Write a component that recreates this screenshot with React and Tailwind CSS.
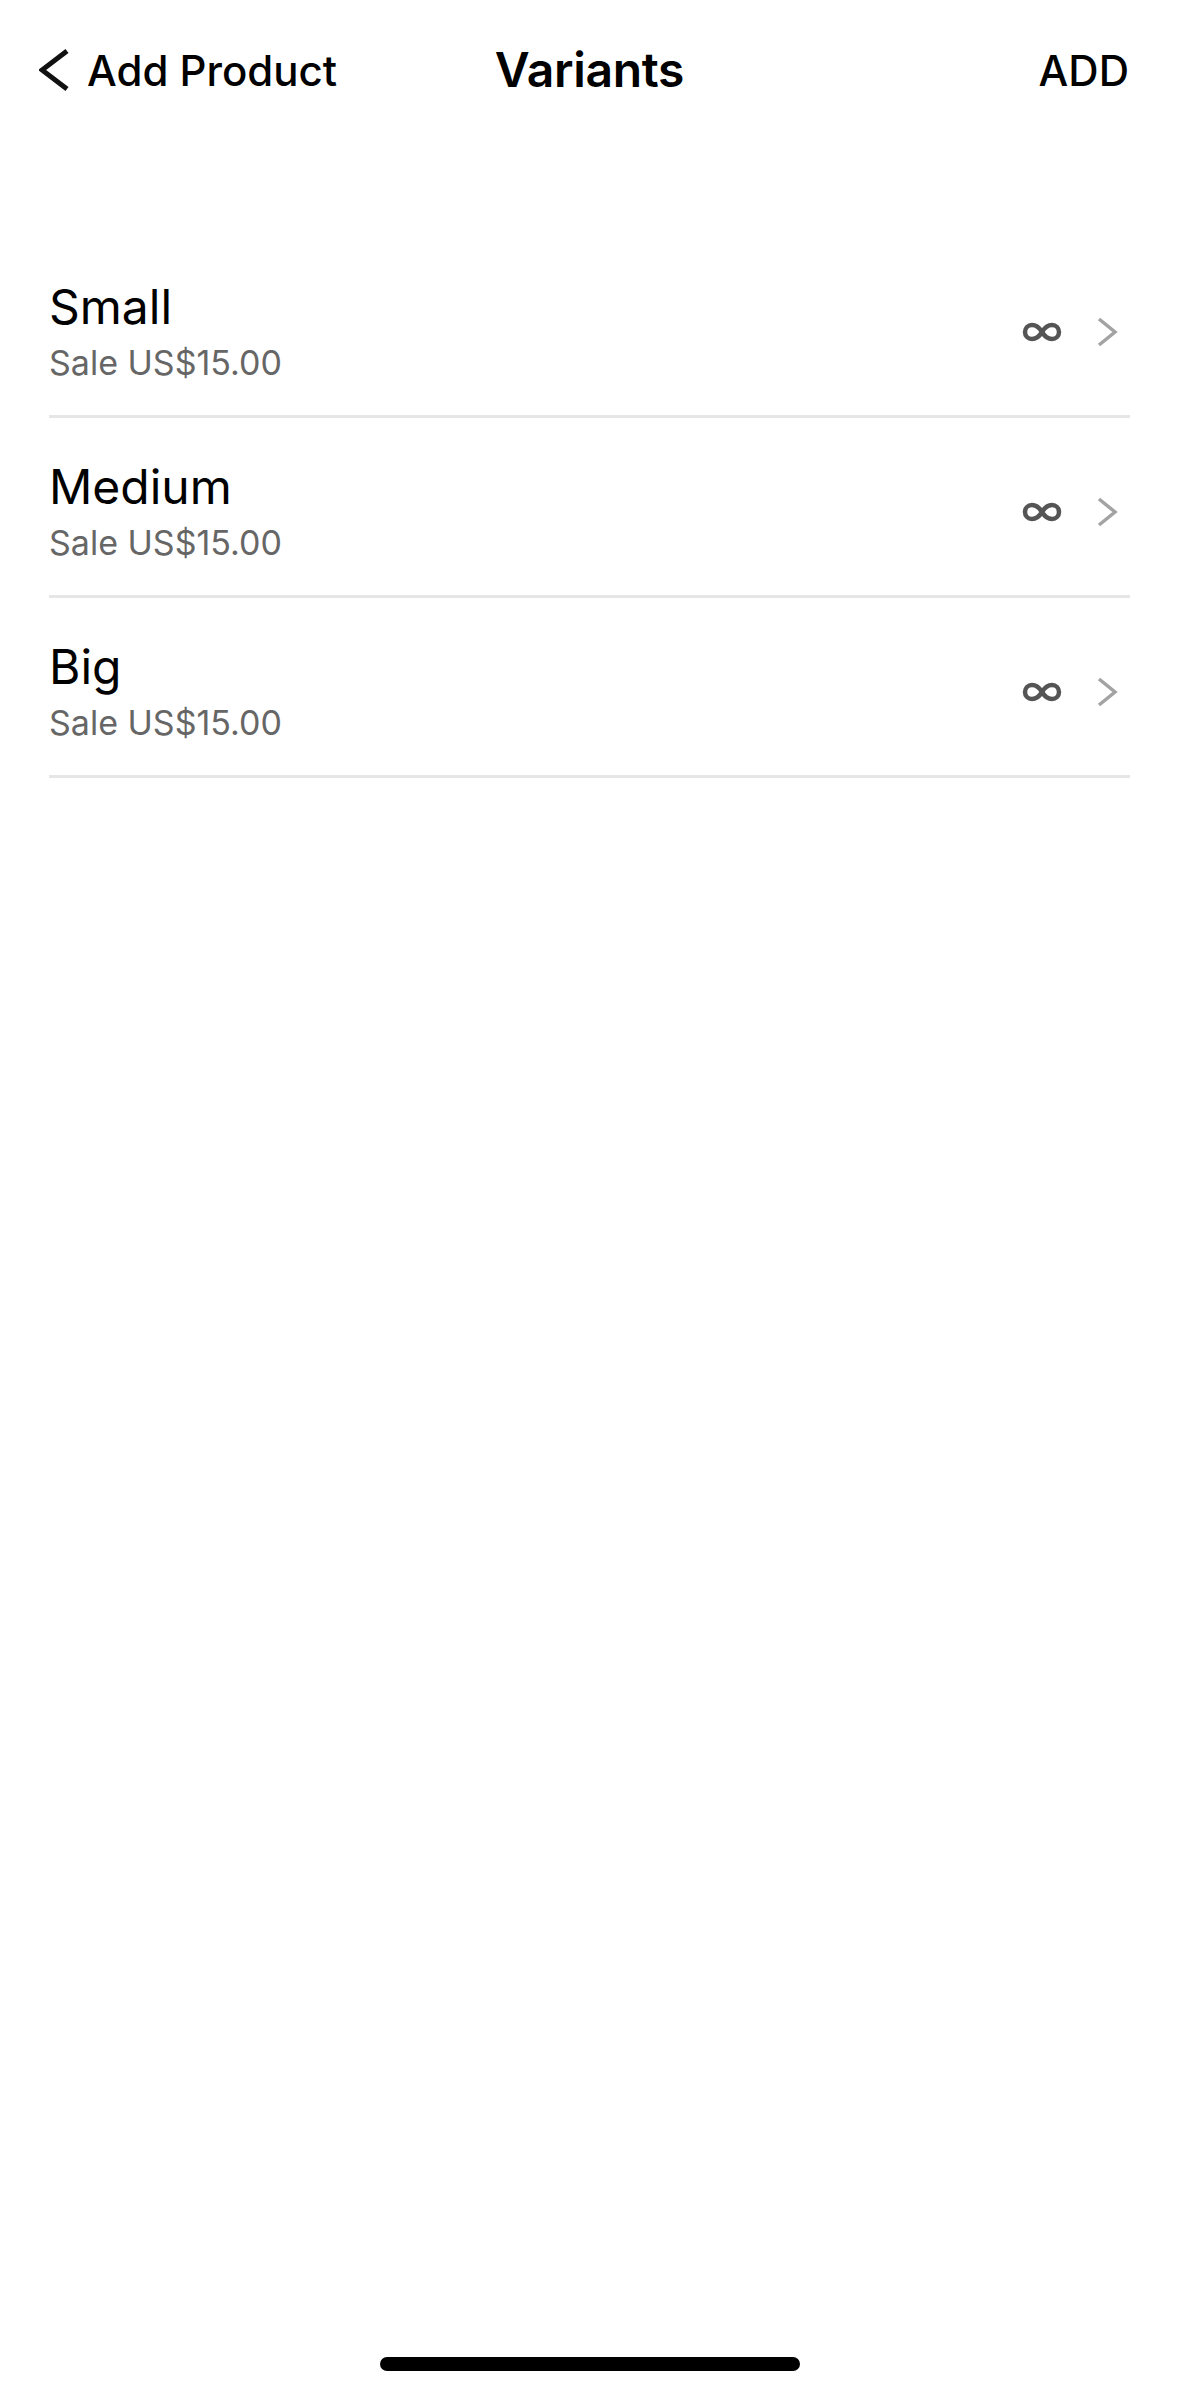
import React from "react";

const variants = [
  { name: "Small", price: "Sale US$15.00" },
  { name: "Medium", price: "Sale US$15.00" },
  { name: "Big", price: "Sale US$15.00" },
];

function Infinity() {
  return (
    <svg width="40" height="20" viewBox="0 0 40 20" fill="none">
      <path
        d="M20 10 C17 5, 14 3, 10 3 C6 3, 3 6, 3 10 C3 14, 6 17, 10 17 C14 17, 17 15, 20 10 C23 5, 26 3, 30 3 C34 3, 37 6, 37 10 C37 14, 34 17, 30 17 C26 17, 23 15, 20 10 Z"
        stroke="#555555"
        strokeWidth="4.5"
        strokeLinejoin="round"
      />
    </svg>
  );
}

function Chevron({ color, width = 22, height = 30, stroke = 3.5, left = false }) {
  return (
    <svg width={width} height={height} viewBox={`0 0 ${width} ${height}`} fill="none">
      <polyline
        points={
          left
            ? `${width - 2},2 3,${height / 2} ${width - 2},${height - 2}`
            : `3,2 ${width - 3},${height / 2} 3,${height - 2}`
        }
        stroke={color}
        strokeWidth={stroke}
        strokeLinecap="butt"
        strokeLinejoin="miter"
      />
    </svg>
  );
}

export default function App() {
  return (
    <div className="h-[2396px] w-[1179px] bg-white flex flex-col font-['Inter',sans-serif] text-black">
      {/* Header */}
      <div className="h-[140px] grid grid-cols-3 items-center">
        <div className="flex items-center gap-[18px] pl-[39px] justify-self-start">
          <Chevron color="#111111" width={30} height={42} stroke={5} left />
          <span className="text-[42px] font-medium">Add Product</span>
        </div>
        <div className="justify-self-center text-[48px] font-semibold tracking-[-0.3px]">
          Variants
        </div>
        <div className="justify-self-end pr-[50px] text-[42px] font-medium">ADD</div>
      </div>

      {/* Variant list */}
      <div className="mt-[98px]">
        {variants.map((v) => (
          <div
            key={v.name}
            className="mx-[49px] h-[180px] pt-[10px] flex items-center justify-between border-b-[3px] border-[#e6e6e6]"
          >
            <div className="flex flex-col">
              <span className="text-[48px] leading-[54px]">{v.name}</span>
              <span className="text-[34px] leading-[40px] mt-[9px] text-[#666666]">{v.price}</span>
            </div>
            <div className="flex items-center gap-[34px] mr-[12px]">
              <Infinity />
              <Chevron color="#a3a3a3" />
            </div>
          </div>
        ))}
      </div>

      {/* Home indicator */}
      <div className="mt-auto mb-[25px] mx-auto w-[420px] h-[14px] rounded-full bg-black" />
    </div>
  );
}
